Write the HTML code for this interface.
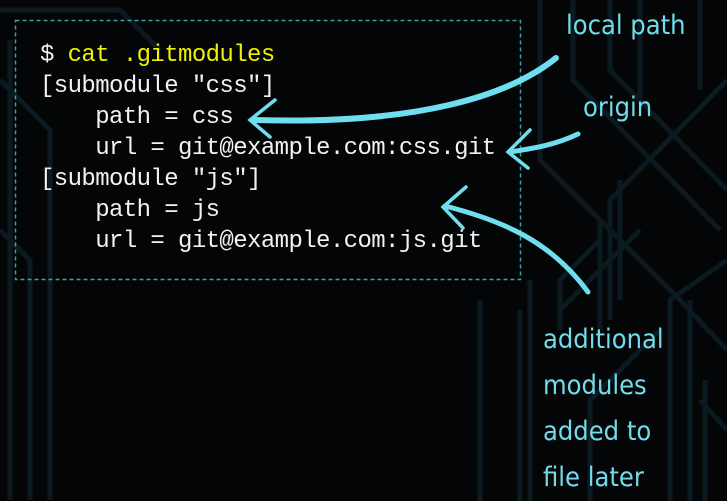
<!DOCTYPE html>
<html><head><meta charset="utf-8"><style>
html,body{margin:0;padding:0;background:#030506;}
#w{position:relative;width:727px;height:501px;overflow:hidden;background:#030506;}
svg{position:absolute;left:0;top:0;}
.code{position:absolute;left:40px;top:40px;font-family:"Liberation Mono",monospace;font-size:24px;letter-spacing:-0.6px;line-height:31px;color:#f2f2f2;white-space:pre;}
.y{color:#f0f000;}
.h{position:absolute;font-family:"DejaVu Sans Condensed","Liberation Sans Narrow",sans-serif;color:#72dcea;font-size:27px;letter-spacing:0px;}
</style></head><body><div id="w">
<svg width="727" height="501" viewBox="0 0 727 501">
<g fill="none" stroke="#0b1a21" stroke-width="5">
<path d="M0 10 L120 10 L160 50"/>
<path d="M10 40 L10 500"/>
<path d="M0 80 L50 130 L50 500"/>
<path d="M0 230 L30 260 L30 500"/>
<path d="M540 0 L540 160 L600 220 L600 330"/>
<path d="M573 0 L573 80 L620 128 L720 230"/>
<path d="M610 0 L610 70 L727 190"/>
<path d="M727 80 L610 200 L610 320"/>
<path d="M727 260 L670 300 L670 501"/>
<path d="M560 180 L680 300 L727 350"/>
<path d="M727 430 L700 400"/>
<path d="M530 280 L530 501"/>
<path d="M480 300 L480 501"/>
<path d="M520 310 L520 501"/>
<path d="M560 330 L560 280 L600 240"/>
<path d="M640 230 L560 310"/>
<path d="M690 300 L690 501"/>
<path d="M705 380 L705 501"/>
<path d="M620 180 L620 300"/>
<path d="M640 100 L640 0"/>
<path d="M700 0 L700 90"/>
<path d="M660 330 L590 400 L590 501"/>
</g>
<rect x="15.5" y="20.5" width="505" height="259" fill="none" stroke="#3fa0a8" stroke-width="1.5" stroke-dasharray="4 3"/>
<g fill="none" stroke="#6fdff0" stroke-linecap="round">
<path d="M556 58 C510 95 420 125 255 120" stroke-width="6"/>
<path d="M275 100 L250 120 L270 137" stroke-width="3.5"/>
<path d="M578 134 C555 145 535 148 510 152" stroke-width="5"/>
<path d="M530 130 L508 152 L528 168" stroke-width="3.5"/>
<path d="M588 292 C550 240 500 220 445 206" stroke-width="5"/>
<path d="M466 187 L443 207 L463 228" stroke-width="3.5"/>
</g>
</svg>
<div class="code"><span>$ </span><span class="y">cat .gitmodules</span>
[submodule "css"]
    path = css
    url = git@example.com:css.git
[submodule "js"]
    path = js
    url = git@example.com:js.git</div>
<div class="h" style="left:566px;top:10px;">local path</div>
<div class="h" style="left:583px;top:92px;">origin</div>
<div class="h" style="left:543px;top:317px;line-height:46px;">additional<br>modules<br>added to<br>file later</div>
</div></body></html>
